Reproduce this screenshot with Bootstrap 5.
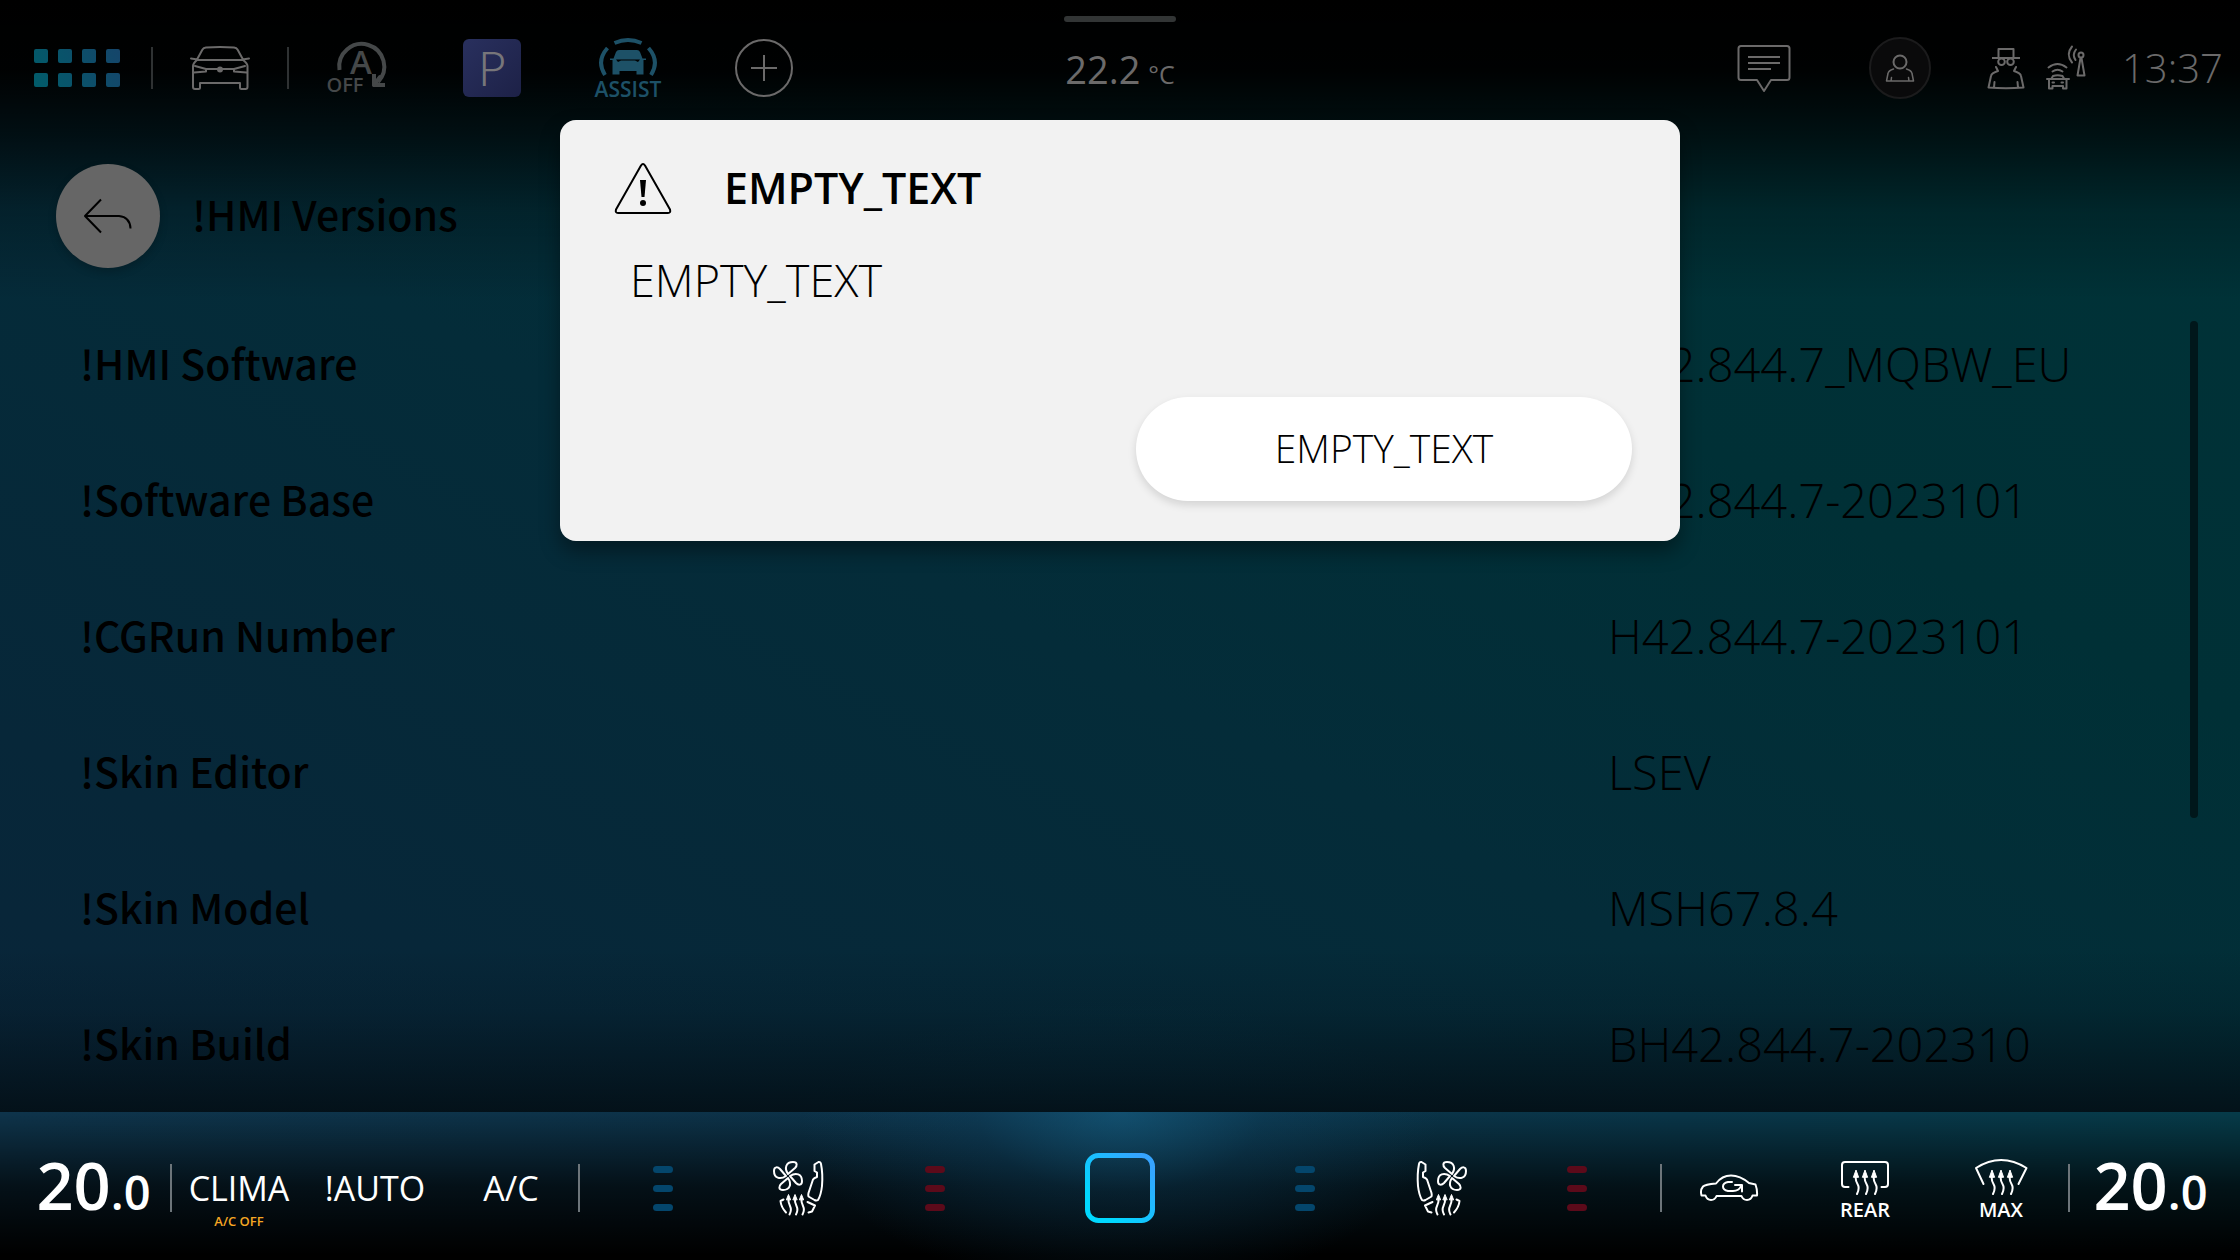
<!DOCTYPE html>
<html lang="en">
<head>
<meta charset="utf-8">
<meta name="viewport" content="width=device-width, initial-scale=1">
<title>!HMI Versions</title>
<link href="https://cdn.jsdelivr.net/npm/bootstrap@5.3.0/dist/css/bootstrap.min.css" rel="stylesheet">
<style>
  :root { --cell: 136px; --dim: #6b6a6a; --label: "Noto Sans CJK JP", "Open Sans", sans-serif; }
  body {
    font-family: "Open Sans", "Noto Sans", sans-serif;
    color: #000;
    background:
      linear-gradient(180deg, #000 0, rgba(0,0,0,.97) 70px, rgba(0,0,0,.66) 136px, rgba(0,0,0,.24) 210px, transparent 300px),
      linear-gradient(0deg, rgba(3,15,22,.9) 148px, rgba(3,15,22,.6) 190px, rgba(3,15,22,.2) 250px, transparent 310px),
      radial-gradient(420px 260px at 50% 100%, rgba(10,66,92,.6), transparent),
      linear-gradient(207deg, #003338 0%, #003036 30%, #042c39 52%, #072739 78%, #0a2439 100%);
  }
  svg { display: block; fill: none; stroke-linecap: round; stroke-linejoin: round; }
  svg text { stroke: none; font-weight: 600; }
  .btn { border: 0; padding: 0; color: inherit; }
  .cell { width: var(--cell); flex: none; display: flex; align-items: center; justify-content: center; }
  .cell-md { width: 76px; }
  .cell-sm { width: 44px; }
  .top-bar { height: 136px; color: var(--dim); }
  .top-bar svg { stroke: var(--dim); stroke-width: 2; }
  .zone { flex: 1 1 0; }
  .apps { width: 152px; padding-left: 34px; justify-content: flex-start; }
  .sep { width: 2px; height: 42px; margin: 0 -1px; background: #2f3233; flex: none; }
  .p-tile { width: 58px; height: 58px; border-radius: 6px; background: linear-gradient(135deg, #29305e, #1d2147); font-family: var(--label); font-size: 46px; line-height: 54px; font-weight: 300; color: #77767a; }
  .grip { width: 112px; height: 6px; background: #323535; margin-top: 16px; }
  .outside { font-size: 38px; line-height: 94px; }
  .outside small { font-size: 25px; margin-left: 8px; }
  .clock { font-size: 40px; font-weight: 300; width: 152px; padding-left: 34px; }
  .title-row { height: 160px; padding: 0 56px; gap: 32px; }
  .back { width: 104px; height: 104px; border-radius: 50%; background: #666; box-shadow: 0 4px 8px rgba(0,0,0,.2); }
  .back:hover { background: #666; }
  .page-title { font-family: var(--label); font-size: 41px; font-weight: 500; padding-bottom: 4px; }
  .versions { table-layout: fixed; }
  .versions tr { height: 136px; line-height: 60px; }
  .versions th { width: 1608px; padding: 0 0 4px 80px; font-family: var(--label); font-size: 41px; font-weight: 500; }
  .versions td { padding: 0; font-size: 47px; font-weight: 300; white-space: nowrap; }
  .rail { width: 8px; height: 497px; border-radius: 4px; background: #00171b; margin: 25px 42px 0 0; flex: none; }
  .climate {
    height: 148px; padding-top: 4px; color: #fff;
    background:
      radial-gradient(320px 180px at 50% 0, rgba(24,104,144,.55), rgba(18,80,116,.26) 45%, transparent),
      linear-gradient(180deg, transparent, rgba(0,0,0,.68) 50%, #000 96%),
      linear-gradient(90deg, #0e344b, #0c3248 45%, #093649 75%, #063b49);
  }
  .climate svg { stroke: #fff; stroke-width: 2; }
  .climate .sep { height: 48px; background: #6d757a; }
  .set-temp { font-size: 65px; line-height: 80px; font-weight: 600; width: 171px; }
  .set-temp small { font-size: 47px; font-weight: 600; }
  .mode { font-size: 34px; line-height: 46px; position: relative; }
  .mode-note { position: absolute; top: 100%; left: 0; right: 0; font-size: 13px; line-height: 20px; font-weight: 600; color: #f5a623; }
  .levels { gap: 12px; }
  .levels i { width: 20px; height: 7px; border-radius: 4px; background: #04466c; }
  .levels.heat i { background: #5c0a1a; }
  .dialog-box {
    position: absolute; z-index: 5; top: 120px; left: 25%; width: 50%; height: 421px;
    background: #f2f2f2; border-radius: 16px; padding: 40px 48px 40px 54px;
    box-shadow: 0 10px 20px rgba(0,0,0,.4);
  }
  .dialog-title { font-size: 43px; line-height: 56px; font-weight: 600; gap: 52px; }
  .dialog-title span { padding-bottom: 2px; }
  .dialog-text { font-size: 45px; line-height: 60px; font-weight: 300; padding-left: 16px; }
  .dialog-box .btn { width: 496px; height: 104px; border-radius: 52px; background: #fff; font-size: 39px; font-weight: 300; padding-bottom: 2px; color: #000; box-shadow: 0 4px 8px rgba(0,0,0,.13); }
</style>
</head>
<body class="vh-100 d-flex flex-column overflow-hidden">

<svg width="0" height="0" class="position-absolute" aria-hidden="true">
  <symbol id="seat" viewBox="772 1160 54 58">
    <g transform="translate(788 1177)">
      <path id="petal" d="M0-2C-4-8-2-14 5-14C10-14 9-10 7-8Z"/>
      <use href="#petal" transform="rotate(90)"/><use href="#petal" transform="rotate(180)"/><use href="#petal" transform="rotate(270)"/>
    </g>
    <path d="M814.500 1165.500L818.500 1163Q820.500 1162.500 821 1165Q823 1175 822 1187Q821 1196 818 1201Q816.500 1202 814.500 1201L808.500 1197.500Q808 1196 808.500 1194L813 1180.500Q814 1179 817 1178V1173.500L814.500 1172Z"/>
    <path d="M783.500 1200.500L780.500 1202Q781 1208 786 1213.500M807.500 1203L815 1206.500L812 1212.500L808.500 1213.500"/>
    <path d="M788.500 1200Q788 1203 790 1207T789.500 1215.500M795 1200Q794.500 1203 796.500 1207T796 1215.500M801.500 1200Q801 1203 803 1207T802.500 1215.500"/>
    <path fill="#fff" stroke-width="1" d="M786.500 1200.500L788.500 1195.500L790.500 1200.500ZM793 1200.500L795 1195.500L797 1200.500ZM799.500 1200.500L801.500 1195.500L803.500 1200.500Z"/>
  </symbol>
  <symbol id="heat" viewBox="-14 0 28 28">
    <path d="M-9 7Q-10 11-7.500 15T-8 25M0 7Q-1 11 1.500 15T1 25M9 7Q8 11 10.500 15T10 25"/>
    <path fill="#fff" stroke-width="1" d="M-11.500 8L-9 1L-6.500 8ZM-2.500 8L0 1L2.500 8ZM6.500 8L9 1L11.500 8Z"/>
  </symbol>
</svg>

<header class="top-bar d-flex flex-shrink-0">
  <div class="zone d-flex align-items-center">
    <button class="btn cell apps" aria-label="Apps">
      <svg width="86" height="38" viewBox="0 0 86 38">
        <defs><linearGradient id="ga" gradientUnits="userSpaceOnUse" x1="0" y1="38" x2="86" y2="0"><stop stop-color="#015c6a"/><stop offset="1" stop-color="#15456a"/></linearGradient></defs>
        <path stroke="none" fill="url(#ga)" d="M2 0h10a2 2 0 0 1 2 2v10a2 2 0 0 1-2 2H2a2 2 0 0 1-2-2V2a2 2 0 0 1 2-2zM26 0h10a2 2 0 0 1 2 2v10a2 2 0 0 1-2 2H26a2 2 0 0 1-2-2V2a2 2 0 0 1 2-2zM50 0h10a2 2 0 0 1 2 2v10a2 2 0 0 1-2 2H50a2 2 0 0 1-2-2V2a2 2 0 0 1 2-2zM74 0h10a2 2 0 0 1 2 2v10a2 2 0 0 1-2 2H74a2 2 0 0 1-2-2V2a2 2 0 0 1 2-2zM2 24h10a2 2 0 0 1 2 2v10a2 2 0 0 1-2 2H2a2 2 0 0 1-2-2V26a2 2 0 0 1 2-2zM26 24h10a2 2 0 0 1 2 2v10a2 2 0 0 1-2 2H26a2 2 0 0 1-2-2V26a2 2 0 0 1 2-2zM50 24h10a2 2 0 0 1 2 2v10a2 2 0 0 1-2 2H50a2 2 0 0 1-2-2V26a2 2 0 0 1 2-2zM74 24h10a2 2 0 0 1 2 2v10a2 2 0 0 1-2 2H74a2 2 0 0 1-2-2V26a2 2 0 0 1 2-2z"/>
      </svg>
    </button>
    <span class="sep"></span>
    <button class="btn cell" aria-label="Vehicle">
      <svg width="64" height="48" viewBox="188 44 64 48">
        <path d="M197 59.500L202.500 49.500Q203.500 47.800 206 47.500Q220 46.500 234 47.500Q236.500 47.800 237.500 49.500L243 59.500M197 60H243M197 60Q193 63.500 193 66V87Q193 89 195 89H198.500Q200 89 200 87.500V83H240V87.500Q240 89 241.500 89H245.500Q247.500 89 247.500 87V66Q247.500 63.500 243 60M197.500 59.500L191 58.500M242.500 59.500L249 58.500M195 66L206 69H234L245 66M194 72.500L206 71.500V69.500M246.500 72.500L234 71.500V69.500"/>
        <circle cx="220" cy="69.500" r="3" fill="#6b6a6a" stroke="none"/>
      </svg>
    </button>
    <span class="sep"></span>
    <button class="btn cell" aria-label="Start-stop off">
      <svg width="66" height="64" viewBox="323 36 66 64">
        <path d="M339.500 70A22.500 22.500 0 1 1 378 82" stroke="#454849" stroke-width="4" stroke-linecap="butt"/>
        <path d="M374 74V85H385" stroke="#454849" stroke-width="4" stroke-linecap="butt"/><path d="M374 85L380 77" stroke="#454849" stroke-width="4"/>
        <text x="361" y="74" font-size="33" text-anchor="middle" fill="#454849">A</text>
        <text x="345" y="92" font-size="20" text-anchor="middle" fill="#454849">OFF</text>
      </svg>
    </button>
    <button class="btn cell" aria-label="Parking"><span class="p-tile">P</span></button>
    <button class="btn cell" aria-label="Assist">
      <svg width="68" height="72" viewBox="594 32 68 72">
        <g stroke="#1d5167" stroke-width="4" stroke-linecap="butt"><path d="M614.500 43Q628 37 641.500 43M607.500 48Q596 61 605 75M648.500 48Q660 61 651 75"/></g>
        <path fill="#1d5167" stroke="none" fill-rule="evenodd" d="M619 50H637Q639 50 640 52L642.500 58.500H646V60H643.500V74.500H636.500V71H619.500V74.500H612.500V60H610V58.500H613.500L616 52Q617 50 619 50ZM616 59.500L618 62L621 60.500H635L638 62L640 59.500Z"/>
        <text x="628" y="97" font-size="21" text-anchor="middle" fill="#1d5167">ASSIST</text>
      </svg>
    </button>
    <button class="btn cell" aria-label="Add">
      <svg width="60" height="60" viewBox="0 0 60 60"><circle cx="30" cy="30" r="28"/><path d="M30 17V43M17 30H43" stroke-linecap="butt"/></svg>
    </button>
  </div>
  <div class="d-flex flex-column align-items-center">
    <div class="grip rounded-pill"></div>
    <div class="outside">22.2<small>°C</small></div>
  </div>
  <div class="zone d-flex align-items-center justify-content-end">
    <button class="btn cell" aria-label="Messages">
      <svg width="56" height="50" viewBox="1736 43 56 50"><path d="M1741 46H1787Q1789.500 46 1789.500 48.500V77.500Q1789.500 80 1787 80H1771L1764 91L1757 80H1741Q1738.500 80 1738.500 77.500V48.500Q1738.500 46 1741 46ZM1748 57H1780M1748 63H1780M1748 69H1771" stroke-linecap="butt"/></svg>
    </button>
    <button class="btn cell" aria-label="User">
      <svg width="64" height="64" viewBox="1868 36 64 64"><circle cx="1900" cy="68" r="30" fill="#0a0a0b" stroke="#1b1b1c"/><circle cx="1900" cy="62" r="6.500"/><path d="M1893.500 69Q1888.500 70.500 1888 73.500L1886.500 81H1913.500L1912 73.500Q1911.500 70.500 1906.500 69M1891.500 77.500L1891 81M1908.500 77.500L1909 81" stroke-width="1.500"/></svg>
    </button>
    <div class="cell cell-md">
      <svg width="40" height="44" viewBox="1986 46 40 44"><path d="M1998.500 58V49H2013.500V58M1992 58H2020" stroke-linecap="butt"/><circle cx="2001.500" cy="61.700" r="3.300"/><circle cx="2010.500" cy="61.700" r="3.300"/><path d="M1996 67L1998 71Q1991.500 73 1991 76L1988.500 87.500Q2006 89 2023.500 87.500L2021 76Q2020.500 73 2014 71L2016 67M1994.500 82L1994 87.500M2017.500 82L2018 87.500"/></svg>
    </div>
    <div class="cell cell-sm">
      <svg width="42" height="46" viewBox="2045 45 42 46"><path d="M2047 79H2069M2051.500 78.500L2053 76Q2057.500 74.500 2062.500 76L2064 78.500M2049 79.500V88.500H2052.500V86H2063V88.500H2066.500V79.500M2052.500 82.500L2054 82.500M2061.500 82.500H2063M2052.500 71.500Q2057.500 68 2062.500 71.500M2048.500 67.500Q2057.500 60.500 2066.500 67.500M2072 46.500Q2065.500 54.500 2072 62.500M2076 49.500Q2072 54.500 2075.500 60M2080.500 58L2077.500 75.500H2084.500L2081.500 58"/><circle cx="2081" cy="55" r="2.500"/></svg>
    </div>
    <div class="clock text-nowrap">13:37</div>
  </div>
</header>

<div class="title-row d-flex align-items-center flex-shrink-0">
  <button class="btn back d-flex align-items-center justify-content-center" aria-label="Back">
    <svg width="50" height="38" viewBox="83 197 50 38" stroke="#000" stroke-width="2"><path d="M101 199.500L85 216L101 232.500M85 216H119Q130 217 130.500 228.500" stroke-linecap="butt"/></svg>
  </button>
  <h1 class="page-title m-0">!HMI Versions</h1>
</div>

<main class="flex-grow-1 d-flex overflow-hidden">
  <div class="flex-grow-1">
    <table class="versions w-100">
      <tbody>
        <tr><th scope="row">!HMI Software</th><td>H42.844.7_MQBW_EU</td></tr>
        <tr><th scope="row">!Software Base</th><td>H42.844.7-2023101</td></tr>
        <tr><th scope="row">!CGRun Number</th><td>H42.844.7-2023101</td></tr>
        <tr><th scope="row">!Skin Editor</th><td>LSEV</td></tr>
        <tr><th scope="row">!Skin Model</th><td>MSH67.8.4</td></tr>
        <tr><th scope="row">!Skin Build</th><td>BH42.844.7-202310</td></tr>
      </tbody>
    </table>
  </div>
  <div class="rail"></div>
</main>

<footer class="climate d-flex align-items-center flex-shrink-0">
  <div class="set-temp text-center ps-3">20<small>.0</small></div>
  <span class="sep"></span>
  <button class="btn cell"><span class="mode">CLIMA<span class="mode-note">A/C OFF</span></span></button>
  <button class="btn cell"><span class="mode">!AUTO</span></button>
  <button class="btn cell"><span class="mode">A/C</span></button>
  <span class="sep"></span>
  <div class="zone d-flex ps-3">
    <button class="btn cell levels flex-column" aria-label="Left seat ventilation"><i></i><i></i><i></i></button>
    <button class="btn cell" aria-label="Left seat"><svg width="54" height="58"><use href="#seat"/></svg></button>
    <button class="btn cell levels heat flex-column" aria-label="Left seat heating"><i></i><i></i><i></i></button>
  </div>
  <button class="btn" aria-label="Home">
    <svg width="70" height="70" viewBox="0 0 70 70"><defs><linearGradient id="gh" x1="0" y1="1" x2="1" y2="0"><stop offset=".2" stop-color="#00d8ff"/><stop offset=".9" stop-color="#36a4ff"/></linearGradient></defs><rect x="2.500" y="2.500" width="65" height="65" rx="11" stroke="url(#gh)" stroke-width="5"/></svg>
  </button>
  <div class="zone d-flex justify-content-end pe-3">
    <button class="btn cell levels flex-column" aria-label="Right seat ventilation"><i></i><i></i><i></i></button>
    <button class="btn cell" aria-label="Right seat"><svg width="54" height="58"><use href="#seat" transform="translate(54 0) scale(-1 1)"/></svg></button>
    <button class="btn cell levels heat flex-column" aria-label="Right seat heating"><i></i><i></i><i></i></button>
  </div>
  <span class="sep"></span>
  <button class="btn cell" aria-label="Recirculation">
    <svg width="60" height="30" viewBox="1699 1172 60 30"><path d="M1705.500 1194.500H1701.500Q1700 1189 1703 1185.500Q1705 1183.500 1716 1182.500Q1722 1174.500 1731 1174.500Q1740 1174.500 1749 1182L1755.500 1183.500Q1757.500 1189 1757 1194.500H1752.500Q1751 1199 1747 1199T1741.500 1195H1716.500Q1715 1199 1711 1199T1705.500 1194.500ZM1732 1181H1728Q1723 1182 1723 1185.500T1728 1190H1733Q1739 1190 1741 1185M1735 1184H1742V1190.500"/></svg>
  </button>
  <button class="btn cell" aria-label="Rear defrost">
    <svg width="60" height="76" viewBox="1835 1150 60 76"><path d="M1848.500 1187H1845Q1842 1187 1842 1184V1165Q1842 1162 1845 1162H1885Q1888 1162 1888 1165V1184Q1888 1187 1885 1187H1881.500"/><use href="#heat" x="1851" y="1169" width="28" height="28"/><text x="1865" y="1217" font-size="20" text-anchor="middle" fill="#fff">REAR</text></svg>
  </button>
  <button class="btn cell" aria-label="Max defrost">
    <svg width="60" height="76" viewBox="1971 1150 60 76"><path d="M1983.500 1184L1976 1168Q2001 1152 2026.500 1168L2018.500 1184"/><use href="#heat" x="1987" y="1169" width="28" height="28"/><text x="2001" y="1217" font-size="20" text-anchor="middle" fill="#fff">MAX</text></svg>
  </button>
  <span class="sep"></span>
  <div class="set-temp text-center pe-3 ps-2">20<small>.0</small></div>
</footer>

<section class="dialog-box d-flex flex-column" role="dialog" aria-labelledby="dlg-title">
  <h2 class="dialog-title d-flex align-items-center m-0">
    <svg width="58" height="54" viewBox="614 162 58 54" stroke="#000" stroke-width="2"><path d="M641 165.500Q643 162.500 645 165.500L670 209.500Q671 213 668 213H618Q615 213 616 209.500Z"/><path fill="#000" stroke="none" d="M640 180H646L644.500 197H641.500Z"/><circle cx="643" cy="203" r="3" fill="#000" stroke="none"/></svg>
    <span id="dlg-title">EMPTY_TEXT</span>
  </h2>
  <p class="dialog-text mt-4 pt-2 mb-auto">EMPTY_TEXT</p>
  <button class="btn align-self-end">EMPTY_TEXT</button>
</section>

<script src="https://cdn.jsdelivr.net/npm/bootstrap@5.3.0/dist/js/bootstrap.bundle.min.js"></script>
</body>
</html>
